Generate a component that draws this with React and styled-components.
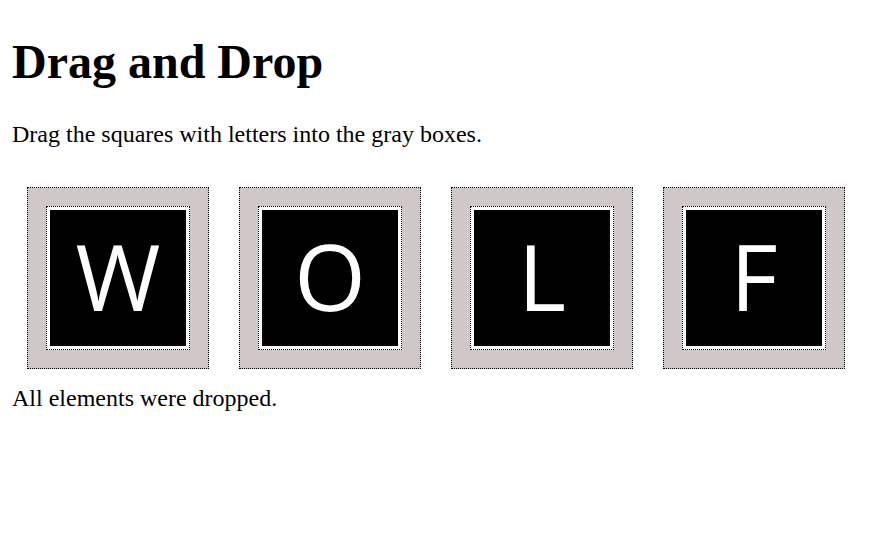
import styled, { createGlobalStyle } from "styled-components";

const GlobalStyle = createGlobalStyle`
  body {
    margin: 12px;
    font-family: "Liberation Serif", "Times New Roman", serif;
    background: #ffffff;
    color: #000000;
  }
`;

const Title = styled.h1`
  font-size: 48px;
  font-weight: bold;
  margin: 22px 0 32px;
`;

const Hint = styled.p`
  font-size: 24px;
  margin: 24px 0;
`;

const Board = styled.div`
  display: flex;
  gap: 30px;
  padding: 15px 15px 16px;
`;

const DropBox = styled.div`
  width: 180px;
  height: 180px;
  border: 1px dotted #000;
  background: #cfc7c8;
  display: flex;
  align-items: center;
  justify-content: center;
`;

const Tile = styled.div`
  border: 1px dotted #000;
  background: #fff;
  padding: 3px;
`;

const Letter = styled.div`
  width: 136px;
  height: 136px;
  box-sizing: border-box;
  padding-bottom: 4px;
  background: #000;
  color: #fff;
  font-family: "Open Sans", "Noto Sans", sans-serif;
  font-size: 92px;
  display: flex;
  align-items: center;
  justify-content: center;
  line-height: 1;
`;

const Status = styled.div`
  font-size: 24px;
`;

const letters = ["W", "O", "L", "F"];

export default function App() {
  return (
    <>
      <GlobalStyle />
      <Title>Drag and Drop</Title>
      <Hint>Drag the squares with letters into the gray boxes.</Hint>
      <Board>
        {letters.map((l) => (
          <DropBox key={l}>
            <Tile>
              <Letter>{l}</Letter>
            </Tile>
          </DropBox>
        ))}
      </Board>
      <Status>All elements were dropped.</Status>
    </>
  );
}
